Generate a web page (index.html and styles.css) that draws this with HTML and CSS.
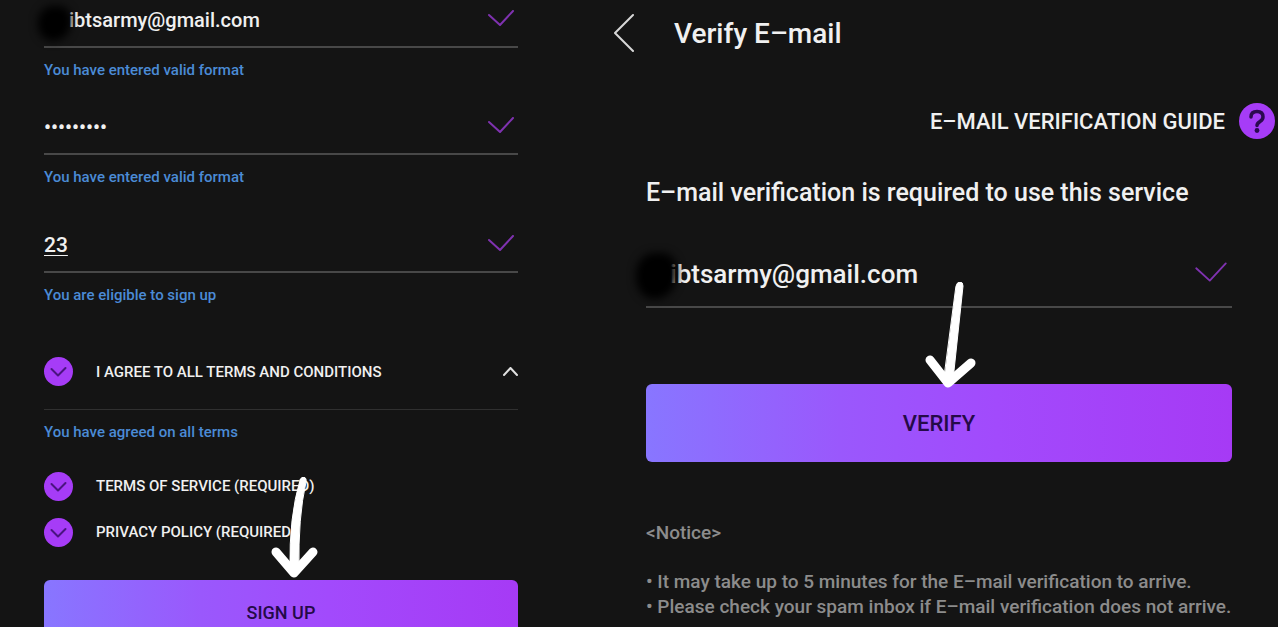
FILE: index.html
```html
<!DOCTYPE html>
<html lang="en">
<head>
    <meta charset="UTF-8">
    <title>Verify E–mail</title>
    <link rel="stylesheet" href="styles.css">
</head>
<body>

    <!-- Sign up form -->
    <form class="panel signup">
        <div class="field">
            <div class="field-row masked">
                <input type="text" id="email" aria-label="E-mail" value="ibtsarmy@gmail.com">
                <svg class="tick" viewBox="0 0 26 16"><path d="M1 5 L12 15 L25 1"/></svg>
            </div>
            <label class="hint" for="email">You have entered valid format</label>
        </div>

        <div class="field">
            <div class="field-row">
                <input type="password" id="password" aria-label="Password" value="bangtan13">
                <svg class="tick" viewBox="0 0 26 16"><path d="M1 5 L12 15 L25 1"/></svg>
            </div>
            <label class="hint" for="password">You have entered valid format</label>
        </div>

        <div class="field age-field">
            <div class="field-row">
                <input type="text" id="age" class="age" aria-label="Age" value="23">
                <svg class="tick" viewBox="0 0 26 16"><path d="M1 5 L12 15 L25 1"/></svg>
            </div>
            <label class="hint" for="age">You are eligible to sign up</label>
        </div>

        <div class="agree-all">
            <label class="term">
                <span class="check">
                    <input type="checkbox" checked>
                    <svg viewBox="0 0 29 29"><path d="M7.500 12 L14 18.500 L21.500 11"/></svg>
                </span>
                I AGREE TO ALL TERMS AND CONDITIONS
            </label>
            <button type="button" class="toggle" aria-label="Collapse terms">
                <svg viewBox="0 0 16 10"><path d="M2 8 L8.500 1 L15 8"/></svg>
            </button>
        </div>
        <p class="hint">You have agreed on all terms</p>

        <div class="terms">
            <label class="term">
                <span class="check">
                    <input type="checkbox" checked>
                    <svg viewBox="0 0 29 29"><path d="M7.500 12 L14 18.500 L21.500 11"/></svg>
                </span>
                TERMS OF SERVICE (REQUIRED)
            </label>
            <label class="term">
                <span class="check">
                    <input type="checkbox" checked>
                    <svg viewBox="0 0 29 29"><path d="M7.500 12 L14 18.500 L21.500 11"/></svg>
                </span>
                PRIVACY POLICY (REQUIRED)
            </label>
        </div>

        <div class="action">
            <button type="button" class="btn">SIGN UP</button>
            <svg class="arrow signup-arrow" viewBox="0 0 50 104">
                <path class="shaft" d="M29 3 Q30 0 33 0 Q36 1 35 5 Q27 40 28 92 L19 92 Q18 40 29 3 Z"/>
                <path d="M5 75 L23 96 L42 75"/>
            </svg>
        </div>
    </form>

    <!-- E-mail verification -->
    <form class="panel verify">
        <header>
            <button type="button" class="back" aria-label="Back">
                <svg viewBox="0 0 21 40"><path d="M19 2 L1 20 L19 38"/></svg>
            </button>
            <h1>Verify E–mail</h1>
        </header>

        <a href="#" class="guide">
            E–MAIL VERIFICATION GUIDE
            <svg viewBox="0 0 36 36">
                <circle cx="18" cy="18" r="18"/>
                <path d="M12 14 Q12 8.500 18 8.500 Q24 8.500 24 14 Q24 16.500 21 18.500 Q18 20.500 18 22.500"/>
                <circle class="dot" cx="18" cy="27.500" r="2.400"/>
            </svg>
        </a>

        <h2>E–mail verification is required to use this service</h2>

        <div class="field-row masked">
            <input type="text" aria-label="E-mail" value="ibtsarmy@gmail.com">
            <svg class="tick" viewBox="0 0 26 16"><path d="M1 5 L12 15 L25 1"/></svg>
        </div>

        <div class="action">
            <button type="button" class="btn">VERIFY</button>
            <svg class="arrow verify-arrow" viewBox="0 0 54 108">
                <path class="shaft" d="M32 4 Q33 0 36 0 Q39 0 39 4 L29 98 L20 98 Z"/>
                <path d="M6 78 L24 101 L47 81"/>
            </svg>
        </div>

        <section class="notice">
            <h3>&lt;Notice&gt;</h3>
            <p>• It may take up to 5 minutes for the E–mail verification to arrive.</p>
            <p>• Please check your spam inbox if E–mail verification does not arrive.</p>
        </section>
    </form>

</body>
</html>
```

FILE: styles.css
```css
* {
    box-sizing: border-box;
}

body {
    margin: 0;
    height: 100vh;
    overflow: hidden;
    display: grid;
    grid-template-columns: 602fr 676fr;
    background: #141414;
    color: #f0f0f0;
    font-family: Roboto, sans-serif;
    font-weight: 500;
}

h1, h2, h3, p {
    margin: 0;
    font-weight: 500;
}

svg {
    display: block;
    fill: none;
    stroke-linecap: round;
    stroke-linejoin: round;
}

button {
    border: none;
    background: none;
    padding: 0;
    cursor: pointer;
}

.signup {
    padding: 0 84px 0 44px;
}

.verify {
    padding: 0 46px 0 44px;
}

/* Fields */
.field-row {
    display: flex;
    justify-content: space-between;
    align-items: flex-start;
    height: 48px;
    border-bottom: 2px solid #484848;
    position: relative;
}

.field-row input {
    flex: 1;
    min-width: 0;
    height: 40px;
    padding: 0;
    border: none;
    outline: none;
    background: none;
    color: #f0f0f0;
    font: inherit;
    font-size: 20px;
}

.field-row .tick {
    width: 26px;
    height: 16px;
    margin: 10px 4px 0 0;
    stroke: #7f32b0;
    stroke-width: 2;
}

.field + .field {
    margin-top: 27px;
}

.field + .age-field {
    margin-top: 38px;
}

.field-row .age {
    font-size: 21px;
    text-decoration: underline;
    text-decoration-thickness: 1px;
    text-underline-offset: 3px;
}

.masked input {
    padding-left: 25px;
}

.masked::before {
    content: "";
    position: absolute;
    left: -6px;
    top: 6px;
    width: 33px;
    height: 35px;
    border-radius: 50% 40% 60% 50%;
    background: #000;
    filter: blur(4px);
}

.hint {
    display: block;
    margin-top: 12px;
    line-height: 20px;
    font-size: 15px;
    font-weight: 500;
    color: #4b8bd6;
}

/* Terms */
.agree-all {
    display: flex;
    justify-content: space-between;
    align-items: center;
    height: 76px;
    margin-top: 29px;
    border-bottom: 1px solid #303030;
}

.term {
    display: flex;
    align-items: center;
    gap: 23px;
    font-size: 15px;
}

.terms {
    margin: 21px 0 25px;
}

.terms .term {
    height: 46px;
}

.check {
    position: relative;
    width: 29px;
    height: 29px;
}

.check input {
    appearance: none;
    display: block;
    width: 29px;
    height: 29px;
    margin: 0;
    border-radius: 50%;
    background: #a63cf7;
}

.check svg {
    position: absolute;
    inset: 0;
    stroke: #4a1480;
    stroke-width: 2;
    pointer-events: none;
}

.toggle svg {
    width: 16px;
    height: 10px;
    stroke: #e0e0e0;
    stroke-width: 2;
}

/* Buttons */
.action {
    position: relative;
}

.btn {
    display: block;
    width: 100%;
    height: 64px;
    border-radius: 6px;
    background: linear-gradient(to right, #8876ff, #9a58fc 33%, #a24afc 60%, #a63af5);
    color: #250a48;
    font: inherit;
    font-size: 18px;
}

.arrow {
    position: absolute;
    left: 50%;
    stroke: #fff;
    stroke-width: 9;
    pointer-events: none;
}

.arrow .shaft {
    fill: #fff;
    stroke-width: 1;
}

.signup-arrow {
    width: 50px;
    height: 104px;
    bottom: 63px;
    margin-left: -10px;
}

.verify-arrow {
    width: 54px;
    height: 108px;
    bottom: 72px;
    margin-left: -15px;
}

/* Verify panel */
header {
    display: flex;
    align-items: center;
    gap: 39px;
    height: 66px;
    margin-left: -32px;
}

.back svg {
    width: 21px;
    height: 40px;
    stroke: #d8d8d8;
    stroke-width: 2;
}

h1 {
    font-size: 28px;
}

.guide {
    display: flex;
    justify-content: flex-end;
    align-items: center;
    gap: 14px;
    height: 36px;
    margin: 37px -43px 0 0;
    color: #f0f0f0;
    font-size: 22px;
    text-decoration: none;
}

.guide svg {
    width: 36px;
    height: 36px;
    fill: #a63cf7;
}

.guide path {
    fill: none;
    stroke: #2b0a50;
    stroke-width: 3.5;
}

.guide .dot {
    fill: #2b0a50;
}

h2 {
    margin-top: 38px;
    line-height: 32px;
    font-size: 25px;
}

.verify .field-row {
    height: 59px;
    margin-top: 40px;
}

.verify .field-row input {
    height: 50px;
    padding-left: 24px;
    font-size: 26px;
}

.verify .masked::before {
    left: -10px;
    width: 41px;
    height: 46px;
    top: 4px;
}

.verify .tick {
    width: 32px;
    height: 20px;
    margin-top: 13px;
    margin-right: 5px;
    stroke-width: 1.5;
}

.verify .action {
    margin-top: 76px;
}

.verify .btn {
    height: 78px;
    font-size: 22px;
}

.notice {
    margin-top: 58px;
    line-height: 25px;
    font-size: 19px;
    color: #8c8c8c;
}

.notice h3 {
    margin-bottom: 24px;
    font-size: 19px;
}
```
